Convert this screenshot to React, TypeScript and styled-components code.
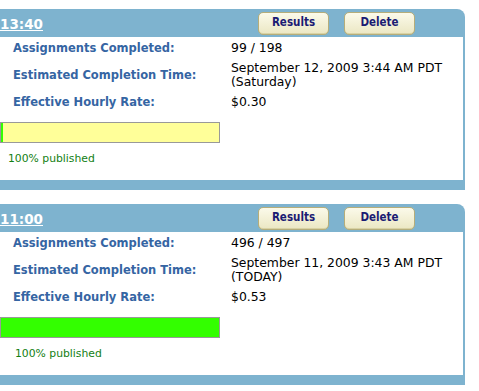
import styled, { createGlobalStyle } from "styled-components";

const GlobalStyle = createGlobalStyle`
    body {
        margin: 0;
        background: #ffffff;
        font-family: "DejaVu Sans", Verdana, sans-serif;
    }
`;

type Job = {
    time: string;
    completed: string;
    eta: string;
    etaNote: string;
    rate: string;
    progress: number;
    publishedIndent: number;
};

const jobs: Job[] = [
    {
        time: "13:40",
        completed: "99 / 198",
        eta: "September 12, 2009 3:44 AM PDT",
        etaNote: "(Saturday)",
        rate: "$0.30",
        progress: 1,
        publishedIndent: 8,
    },
    {
        time: "11:00",
        completed: "496 / 497",
        eta: "September 11, 2009 3:43 AM PDT",
        etaNote: "(TODAY)",
        rate: "$0.53",
        progress: 100,
        publishedIndent: 15,
    },
];

function App() {
    return (
        <Page>
            <GlobalStyle />
            {jobs.map((job) => (
                <Panel key={job.time}>
                    <Header>
                        <Title href="#">{job.time}</Title>
                        <Buttons>
                            <Button type="button">Results</Button>
                            <Button type="button">Delete</Button>
                        </Buttons>
                    </Header>
                    <Body>
                        <Stats>
                            <Label>Assignments Completed:</Label>
                            <Value>{job.completed}</Value>
                            <Label>Estimated Completion Time:</Label>
                            <Value>
                                {job.eta}
                                <br />
                                {job.etaNote}
                            </Value>
                            <Label>Effective Hourly Rate:</Label>
                            <Value>{job.rate}</Value>
                        </Stats>
                        <Bar>
                            <BarFill style={{ width: `${job.progress}%` }} />
                        </Bar>
                        <Published $indent={job.publishedIndent}>
                            100% published
                        </Published>
                    </Body>
                    <Footer />
                </Panel>
            ))}
        </Page>
    );
}

export default App;

const Page = styled.div`
    display: flex;
    flex-direction: column;
    row-gap: 14px;
    padding-top: 9px;
`;

const Panel = styled.div`
    width: 465px;
`;

const Header = styled.div`
    display: flex;
    align-items: center;
    justify-content: space-between;
    height: 28px;
    padding-right: 50px;
    box-sizing: border-box;
    background-color: #7eb3cf;
    border-top-right-radius: 8px;
`;

const Title = styled.a`
    color: #ffffff;
    font-weight: bold;
    font-size: 13.5px;
    text-decoration: underline;
    margin-top: 2px;
`;

const Buttons = styled.div`
    display: flex;
    column-gap: 15px;
`;

const Button = styled.button`
    width: 71px;
    height: 23px;
    padding: 0 0 2px;
    border: 1px solid #b5ad7a;
    border-radius: 5px;
    background: linear-gradient(#fbfaea, #ebe7c3);
    box-shadow: inset 0 -1px 0 #d8d2a4;
    color: #1b1b73;
    font-family: "DejaVu Sans Condensed", "DejaVu Sans", sans-serif;
    font-stretch: condensed;
    font-weight: bold;
    font-size: 11.5px;
`;

const Body = styled.div`
    height: 143px;
    box-sizing: border-box;
    padding-top: 1px;
    background: #ffffff;
    border-right: 2px solid #7eb3cf;
`;

const Stats = styled.div`
    display: grid;
    grid-template-columns: 231px auto;
    align-items: center;
`;

const Label = styled.div`
    padding: 3px 0 3px 13px;
    line-height: 14px;
    color: #3565a3;
    font-weight: bold;
    font-size: 11.5px;
`;

const Value = styled.div`
    padding: 3px 0;
    line-height: 14px;
    color: #000000;
    font-size: 12.4px;
`;

const Bar = styled.div`
    width: 220px;
    height: 21px;
    margin-top: 10px;
    box-sizing: border-box;
    border: 1px solid #999999;
    background-color: #ffff99;
`;

const BarFill = styled.div`
    height: 100%;
    min-width: 2px;
    background-color: #33ff00;
`;

const Published = styled.div<{ $indent: number }>`
    margin-top: 9px;
    padding-left: ${(p) => p.$indent}px;
    color: #138013;
    font-size: 10.8px;
`;

const Footer = styled.div`
    height: 10px;
    background-color: #7eb3cf;
`;
